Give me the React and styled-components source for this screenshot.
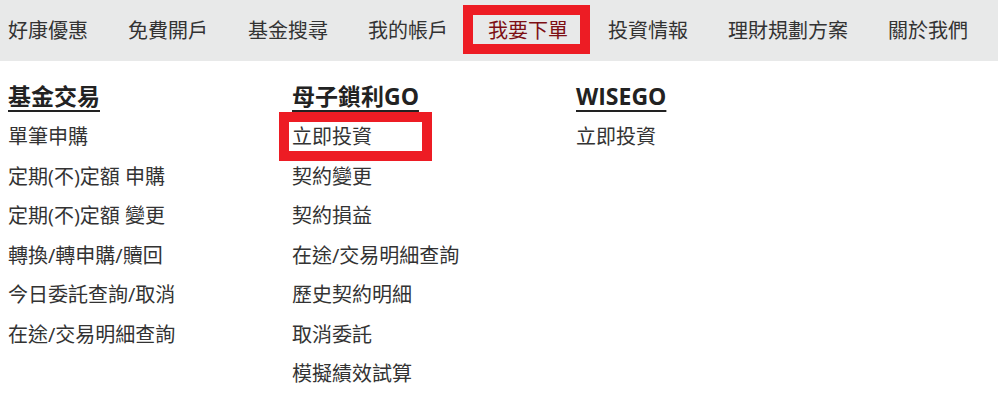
import React from 'react';
import styled, { createGlobalStyle } from 'styled-components';

const GlobalStyle = createGlobalStyle`
    body {
        margin: 0;
        background: #fff;
        font-family: "Open Sans", "Noto Sans CJK TC", "Noto Sans", sans-serif;
        color: #333;
    }
`;

const navItems = ['好康優惠', '免費開戶', '基金搜尋', '我的帳戶', '我要下單', '投資情報', '理財規劃方案', '關於我們'];

const columns = [
    {
        title: '基金交易',
        links: ['單筆申購', '定期(不)定額 申購', '定期(不)定額 變更', '轉換/轉申購/贖回', '今日委託查詢/取消', '在途/交易明細查詢'],
    },
    {
        title: '母子鎖利GO',
        links: ['立即投資', '契約變更', '契約損益', '在途/交易明細查詢', '歷史契約明細', '取消委託', '模擬績效試算'],
        marked: 0,
    },
    {
        title: 'WISEGO',
        links: ['立即投資'],
    },
];

const App = () => (
    <>
        <GlobalStyle />
        <NavBar>
            {navItems.map((item) => (
                <NavItem key={item} $active={item === '我要下單'}>{item}</NavItem>
            ))}
        </NavBar>
        <Menu>
            {columns.map((col) => (
                <Column key={col.title}>
                    <Heading>{col.title}</Heading>
                    <LinkList>
                        {col.links.map((link, i) => (
                            <LinkItem key={link} $marked={col.marked === i}>{link}</LinkItem>
                        ))}
                    </LinkList>
                </Column>
            ))}
        </Menu>
    </>
);

// 상단 회색 메뉴 바
const NavBar = styled.nav`
    display: flex;
    gap: 40px;
    height: 61px;
    padding-left: 8px;
    background: #e8e9e9;
`;

const NavItem = styled.div`
    position: relative;
    display: flex;
    align-items: center;
    padding-bottom: 2px;
    font-size: 20px;
    color: ${(p) => (p.$active ? '#7d0f14' : '#333')};
    white-space: nowrap;

    ${(p) => p.$active && `
        &::after {
            content: '';
            position: absolute;
            left: -25px;
            top: 5px;
            width: 127px;
            height: 49px;
            box-sizing: border-box;
            border: 10px solid #ed1c24;
        }
    `}
`;

const Menu = styled.div`
    display: grid;
    grid-template-columns: repeat(3, 284px);
    padding: 20px 8px 0;
`;

const Column = styled.div`
    display: flex;
    flex-direction: column;
`;

const Heading = styled.div`
    font-size: 23px;
    font-weight: 700;
    line-height: 30px;
    color: #222;
    text-decoration: underline;
    text-decoration-thickness: 2px;
    text-underline-offset: 5px;
    margin-bottom: 6px;
`;

const LinkList = styled.ul`
    list-style: none;
    margin: 0;
    padding: 0;
`;

const LinkItem = styled.li`
    position: relative;
    font-size: 20px;
    line-height: 39.5px;
    color: #333;
    white-space: nowrap;

    ${(p) => p.$marked && `
        &::after {
            content: '';
            position: absolute;
            left: -13px;
            top: -5px;
            width: 153px;
            height: 49px;
            box-sizing: border-box;
            border: 10px solid #ed1c24;
        }
    `}
`;

export default App;
